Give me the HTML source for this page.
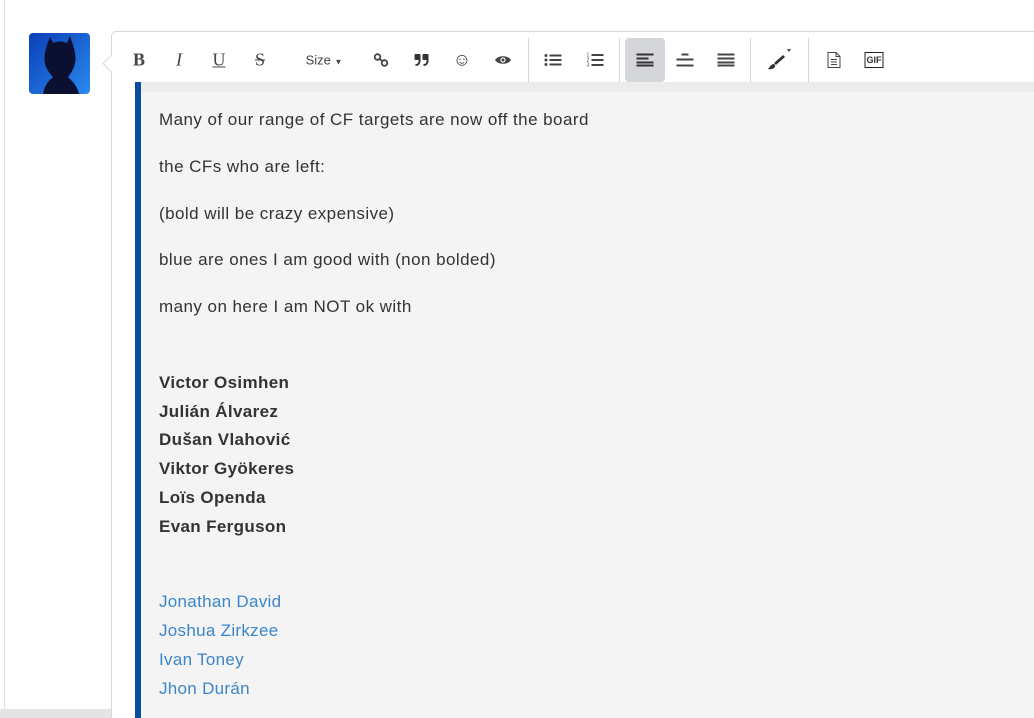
<!DOCTYPE html>
<html><head><meta charset="utf-8"><style>
html,body{margin:0;width:1034px;height:718px;overflow:hidden}
body{background:#fff;font-family:"Liberation Sans",sans-serif;position:relative}
.lline{position:absolute;left:4px;top:0;width:1px;height:718px;background:#e0e0e0}
.bstrip{position:absolute;left:0;top:709px;width:111px;height:9px;background:#e4e4e4}
.av{position:absolute;left:29px;top:33px;width:61px;height:61px;border-radius:4px;background:linear-gradient(135deg,#0a3fb5,#2a8af0);overflow:hidden}
.ed{position:absolute;left:111px;top:31px;width:940px;height:720px;border:1px solid #d8d8d8;border-radius:5px;background:#fff}
.arrow{position:absolute;width:12px;height:12px;background:#fff;border-left:1px solid #d8d8d8;border-bottom:1px solid #d8d8d8;transform:rotate(45deg)}
.tb{position:absolute;left:0;top:0;height:50px;width:100%}
.b{position:absolute;top:28px;transform:translate(-50%,-50%);color:#444;font-size:18px}
.sep{position:absolute;top:6px;width:1px;height:44px;background:#d6d6d6}
.content{position:absolute;left:135px;top:82px;width:900px;height:640px;background:#f4f4f4}
.top{position:absolute;left:0;top:0;width:100%;height:10px;background:#edecea}
.bar{position:absolute;left:0;top:0;width:6px;height:100%;background:#0a4da0}
.t{position:absolute;left:24px;font-size:17px;color:#333;line-height:20px;white-space:nowrap;letter-spacing:0.45px}
.bold{font-weight:bold;letter-spacing:0.35px}
.blue{color:#3b86c8;letter-spacing:0.3px}
</style></head><body>
<div class="lline"></div><div class="bstrip"></div>
<div class="av"><svg width="61" height="61"><path d="M14 61 C16 50 22 46 24 44 C18 38 14 30 16 20 C17 14 19 9 21 4 L24 10 C28 8 34 8 38 10 L41 3 C43 9 45 14 46 20 C48 30 44 38 39 44 C42 47 48 52 50 61Z" fill="#0b0f30"/></svg></div>
<div class="ed">
<div class="tb">
<div class="b" style="left:27px;font-family:'Liberation Serif';font-weight:bold">B</div>
<div class="b" style="left:67px;font-family:'Liberation Serif';font-style:italic">I</div>
<div class="b" style="left:107px;font-family:'Liberation Serif';text-decoration:underline">U</div>
<div class="b" style="left:148px;font-family:'Liberation Serif';text-decoration:line-through">S</div>
<div class="b" style="left:212px;font-size:13px">Size <span style="font-size:8px">▼</span></div>
<svg class="b" style="left:269px" width="15" height="14" viewBox="0 0 15 14"><circle cx="4" cy="4" r="2.8" fill="none" stroke="#444" stroke-width="1.8"/><circle cx="11" cy="10" r="2.8" fill="none" stroke="#444" stroke-width="1.8"/><path d="M6 6L9 8" stroke="#444" stroke-width="1.8"/></svg>
<svg class="b" style="left:310px" width="15" height="12" viewBox="0 0 15 12"><g fill="#333"><rect x="0" y="0" width="6" height="6" rx="1"/><path d="M4 5H6V7C6 10 4 12 1 12V10C3 10 4 9 4 7Z"/><rect x="8" y="0" width="6" height="6" rx="1"/><path d="M12 5H14V7C14 10 12 12 9 12V10C11 10 12 9 12 7Z"/></g></svg>
<div class="b" style="left:350px">☺</div>
<svg class="b" style="left:391px" width="16" height="12" viewBox="0 0 16 12"><path d="M0 6C3 1 13 1 16 6C13 11 3 11 0 6Z" fill="#444"/><circle cx="8" cy="6" r="2.6" fill="#fff"/><circle cx="8" cy="6" r="1.5" fill="#444"/></svg>
<div class="sep" style="left:416px"></div>
<svg class="b" style="left:441px" width="17" height="13"><g fill="#444"><circle cx="1.5" cy="2" r="1.5"/><circle cx="1.5" cy="6.5" r="1.5"/><circle cx="1.5" cy="11" r="1.5"/><rect x="5" y="1" width="12" height="2"/><rect x="5" y="5.5" width="12" height="2"/><rect x="5" y="10" width="12" height="2"/></g></svg>
<svg class="b" style="left:483px" width="17" height="15"><g fill="#444"><text x="0" y="4" font-size="5">1</text><text x="0" y="9" font-size="5">2</text><text x="0" y="14" font-size="5">3</text><rect x="5" y="1.5" width="12" height="2"/><rect x="5" y="6.5" width="12" height="2"/><rect x="5" y="11.5" width="12" height="2"/></g></svg>
<div class="sep" style="left:507px"></div>
<div style="position:absolute;left:513px;top:6px;width:40px;height:44px;background:#d5d6d9;border-radius:4px"></div>
<svg class="b" style="left:533px" width="17" height="13"><g fill="#333"><rect y="0" width="17" height="2"/><rect y="4" width="12" height="2"/><rect y="8" width="17" height="2"/><rect y="11" width="17" height="2"/></g></svg>
<svg class="b" style="left:573px" width="17" height="13"><g fill="#444"><rect x="5" y="0" width="7" height="2"/><rect x="0" y="5" width="17" height="2"/><rect x="0" y="11" width="17" height="2"/></g></svg>
<svg class="b" style="left:614px" width="17" height="13"><g fill="#444"><rect y="0" width="17" height="2"/><rect y="4" width="17" height="2"/><rect y="8" width="17" height="2"/><rect y="11" width="17" height="2"/></g></svg>
<div class="sep" style="left:638px"></div>
<svg class="b" style="left:667px" width="24" height="22"><path d="M20 0l4 0-2 3z" fill="#444"/><path d="M16 6 L18 8 L9 16 L7 14Z M7 15 C4 15 3 18 1 20 C5 21 9 19 8 16Z" fill="#333"/></svg>
<div class="sep" style="left:696px"></div>
<svg class="b" style="left:722px" width="14" height="17"><path d="M1 1H9L13 5V16H1Z M9 1V5H13" fill="none" stroke="#444"/><path d="M4 8H10M4 10.5H10M4 13H10" stroke="#444"/></svg>
<div class="b" style="left:762px;border:1.5px solid #222;font-size:9px;font-weight:bold;padding:2px 1px;line-height:10px;color:#333">GIF</div>
</div>
<div class="arrow" style="left:-7px;top:25px"></div>
</div>
<div class="content"><div class="top"></div><div class="bar"></div>
<div class="t" style="top:28px">Many of our range of CF targets are now off the board</div>
<div class="t" style="top:75px">the CFs who are left:</div>
<div class="t" style="top:122px">(bold will be crazy expensive)</div>
<div class="t" style="top:168px">blue are ones I am good with (non bolded)</div>
<div class="t" style="top:215px">many on here I am NOT ok with</div>
<div class="t bold" style="top:291px">Victor Osimhen</div>
<div class="t bold" style="top:320px">Julián Álvarez</div>
<div class="t bold" style="top:348px">Dušan Vlahović</div>
<div class="t bold" style="top:377px">Viktor Gyökeres</div>
<div class="t bold" style="top:406px">Loïs Openda</div>
<div class="t bold" style="top:435px">Evan Ferguson</div>
<div class="t blue" style="top:510px">Jonathan David</div>
<div class="t blue" style="top:539px">Joshua Zirkzee</div>
<div class="t blue" style="top:568px">Ivan Toney</div>
<div class="t blue" style="top:597px">Jhon Durán</div>
</div>
</body></html>
